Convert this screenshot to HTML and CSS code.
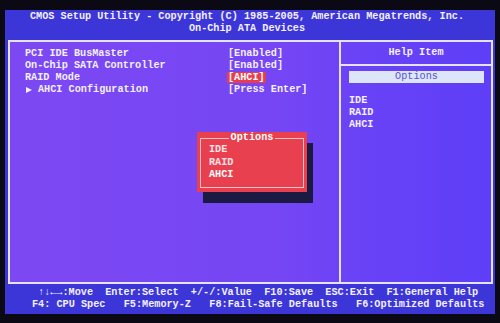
FILE: index.html
```html
<!DOCTYPE html>
<html lang="en">
<head>
    <meta charset="UTF-8">
    <meta name="viewport" content="width=device-width, initial-scale=1.0">
    <title>On-Chip ATA Devices</title>
    <link rel="stylesheet" href="styles.css">
</head>
<body>
    <div class="screen">
        <div class="title">
            <div>CMOS Setup Utility - Copyright (C) 1985-2005, American Megatrends, Inc.</div>
            <div>On-Chip ATA Devices</div>
        </div>

        <div class="frame">
            <!-- Lista de opciones -->
            <div class="items">
                <div class="row"><span>PCI IDE BusMaster</span><span>[Enabled]</span></div>
                <div class="row"><span>On-Chip SATA Controller</span><span>[Enabled]</span></div>
                <div class="row"><span>RAID Mode</span><span><span class="selected">[AHCI]</span></span></div>
                <div class="row"><span><span class="arrow"></span>AHCI Configuration</span><span>[Press Enter]</span></div>
            </div>

            <!-- Panel de ayuda -->
            <div class="help">
                <div class="help-head">Help Item</div>
                <div class="help-box">Options</div>
                <div class="help-list">
                    <div>IDE</div>
                    <div>RAID</div>
                    <div>AHCI</div>
                </div>
            </div>

            <!-- Menú emergente -->
            <div class="popup">
                <div class="popup-inner">
                    <div class="popup-title"><span>Options</span></div>
                    <div class="popup-item">IDE</div>
                    <div class="popup-item">RAID</div>
                    <div class="popup-item active">AHCI</div>
                </div>
            </div>
        </div>

        <div class="footer">
            <div class="keys-1">↑↓←→:Move  Enter:Select  +/-/:Value  F10:Save  ESC:Exit  F1:General Help</div>
            <div class="keys-2">F4: CPU Spec   F5:Memory-Z   F8:Fail-Safe Defaults   F6:Optimized Defaults</div>
        </div>
    </div>
</body>
</html>
```

FILE: styles.css
```css
html, body {
    margin: 0;
    padding: 0;
}

body {
    width: 500px;
    height: 323px;
    overflow: hidden;
    background-color: #0b0a14;
    font-family: "Liberation Mono", "DejaVu Sans Mono", monospace;
    font-size: 10.2px;
    font-weight: bold;
    line-height: 12px;
    color: #f2f0ff;
}

.screen {
    margin: 10px 5px 0;
    height: 304px;
    background-color: #3c36d8;
    overflow: hidden;
}

.title {
    padding: 1px 6px 0 0;
    text-align: center;
}

.frame {
    position: relative;
    box-sizing: border-box;
    height: 244px;
    margin: 5px 2px 0 3px;
    border: 2px solid #e6e2fa;
    display: grid;
    grid-template-columns: 329px 1fr;
    background: linear-gradient(to right, #7c48f2 0%, #7646f4 55%, #6842f6 75%, #5e3ef8 100%);
}

.items {
    padding: 6px 0 0 15px;
}

.row {
    display: grid;
    grid-template-columns: 203px 1fr;
    white-space: pre;
}

.selected {
    background-color: #e63e4e;
    color: #ffffff;
    padding: 0 1px;
    margin-left: -1px;
}

.arrow {
    display: inline-block;
    width: 0;
    height: 0;
    border-left: 6px solid #f2f0ff;
    border-top: 3.5px solid transparent;
    border-bottom: 3.5px solid transparent;
    margin: 0 6px 0 1px;
    vertical-align: -0.5px;
}

.help {
    border-left: 2px solid #e6e2fa;
}

.help-head {
    padding: 5px 0;
    text-align: center;
    border-bottom: 2px solid #e6e2fa;
}

.help-box {
    margin: 5px 7px 0 8px;
    background-color: #dce6f8;
    color: #5a52cc;
    font-weight: normal;
    text-align: center;
}

.help-list {
    margin-top: 12px;
    padding-left: 8px;
}

/* Menú emergente */
.popup {
    position: absolute;
    left: 187px;
    top: 90px;
    width: 110px;
    height: 60px;
    box-sizing: border-box;
    padding: 6px 3px 4px;
    background-color: #e8404e;
    box-shadow: 6px 11px 0 #1b1a42;
}

.popup-inner {
    height: 100%;
    box-sizing: border-box;
    border: 1px solid #f6c0c6;
}

.popup-title {
    margin-top: -7px;
    text-align: center;
}

.popup-title span {
    background-color: #e8404e;
    color: #ffffff;
    padding: 0 2px;
}

.popup-item {
    padding-left: 8px;
    line-height: 12.5px;
    color: #fbe2e6;
}

.popup-item.active {
    color: #ffffff;
}

.footer {
    padding-top: 3px;
}

.keys-1,
.keys-2 {
    white-space: pre;
}

.keys-1 {
    padding-left: 33px;
}

.keys-2 {
    padding-left: 27px;
}
```
